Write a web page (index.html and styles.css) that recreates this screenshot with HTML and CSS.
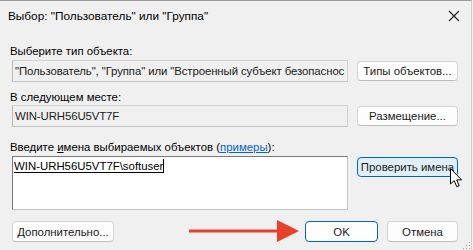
FILE: index.html
```html
<!DOCTYPE html>
<html lang="ru">
<head>
    <meta charset="UTF-8">
    <title>Выбор: "Пользователь" или "Группа"</title>
    <link rel="stylesheet" href="styles.css">
</head>
<body>
    <div class="dialog">
        <div class="titlebar">
            <span class="title">Выбор: "Пользователь" или "Группа"</span>
            <svg class="close" width="12" height="12" viewBox="0 0 12 12">
                <path d="M1 1 L11 11 M11 1 L1 11" stroke="#1a1a1a" stroke-width="1.1" fill="none"/>
            </svg>
        </div>

        <div class="content">
            <div class="label first">Выберите тип объекта:</div>
            <div class="row">
                <div class="field">"Пользователь", "Группа" или "Встроенный субъект безопаснос</div>
                <button class="btn">Типы объектов...</button>
            </div>

            <div class="label second">В следующем месте:</div>
            <div class="row">
                <div class="field">WIN-URH56U5VT7F</div>
                <button class="btn">Размещение...</button>
            </div>

            <div class="label third">Введите <u>и</u>мена выбираемых объектов (<a class="link">примеры</a>):</div>
            <div class="row top">
                <div class="names"><span class="resolved">WIN-URH56U5VT7F\softuser</span><span class="caret"></span></div>
                <button class="btn check">Проверить имена</button>
            </div>

            <div class="bottom">
                <button class="btn more">Дополнительно...</button>
                <div class="spacer"></div>
                <button class="btn ok">OK</button>
                <button class="btn cancel">Отмена</button>
            </div>
        </div>

        <!-- red arrow pointing at OK -->
        <svg class="arrow" width="112" height="22" viewBox="0 0 112 22">
            <path d="M0 9.5 H92 V12.5 H0 Z" fill="#e8402a"/>
            <path d="M88 0 L110 11 L88 22 Z" fill="#e8402a"/>
        </svg>

        <!-- mouse pointer -->
        <svg class="pointer" width="13" height="20" viewBox="0 0 13 20">
            <path d="M0.5 0.5 V16 L4.2 12.6 L6.8 18.8 L9.2 17.8 L6.7 11.9 L11.6 11.9 Z" fill="#fff" stroke="#000" stroke-width="1" stroke-linejoin="round"/>
        </svg>

        <svg class="grip" width="9" height="9" viewBox="0 0 9 9">
            <rect x="7" y="1" width="1" height="1" fill="#a0a0a0"/>
            <rect x="4" y="4" width="1" height="1" fill="#a0a0a0"/>
            <rect x="7" y="4" width="1" height="1" fill="#a0a0a0"/>
            <rect x="1" y="7" width="1" height="1" fill="#a0a0a0"/>
            <rect x="4" y="7" width="1" height="1" fill="#a0a0a0"/>
            <rect x="7" y="7" width="1" height="1" fill="#a0a0a0"/>
        </svg>
    </div>
</body>
</html>
```

FILE: styles.css
```css
body {
    margin: 0;
    padding: 0;
    background-color: #f0f0f0;
    font-family: "Segoe UI", "Liberation Sans", Arial, sans-serif;
    font-size: 11.4px;
    color: #000;
}

.dialog {
    position: relative;
    width: 471px;
    height: 249px;
    border-top: 1px solid #9b9b9b;
    border-right: 1px solid #cfcfcf;
    background-color: #f0f0f0;
    overflow: hidden;
}

.titlebar {
    height: 29px;
    display: flex;
    align-items: center;
    justify-content: space-between;
    padding: 0 11px 0 8px;
}

.title {
    font-size: 11.8px;
}

.close {
    display: block;
}

.content {
    padding: 0 13px 0 12px;
}

.label {
    line-height: 16px;
    margin-left: -2px;
}

.label.first {
    margin-top: 13px;
    margin-bottom: 1px;
}

.label.second {
    margin-top: 7px;
}

.label.third {
    margin-top: 12px;
    margin-bottom: 1px;
}

.link {
    color: #0066cc;
    text-decoration: underline;
}

.row {
    display: flex;
    align-items: center;
    gap: 9px;
}

.row.top {
    align-items: flex-start;
}

.field {
    box-sizing: border-box;
    width: 336px;
    height: 22px;
    line-height: 20px;
    padding: 0 2px;
    border: 1px solid #d2d2d2;
    border-left-color: #b9b9b9;
    border-bottom-color: #c2c2c2;
    white-space: nowrap;
    overflow: hidden;
    letter-spacing: -0.1px;
    color: #1a1a1a;
}

.btn {
    box-sizing: border-box;
    width: 101px;
    height: 20px;
    padding: 0;
    font-family: inherit;
    font-size: 11.4px;
    color: #1a1a1a;
    background-color: #fdfdfd;
    border: 1px solid #d3d3d3;
    border-bottom-color: #bdbdbd;
    border-radius: 4px;
    white-space: nowrap;
}

.btn.check {
    margin-top: 1px;
    background-color: #e0eef9;
    border-color: #0067c0;
}

.names {
    box-sizing: border-box;
    width: 336px;
    height: 54px;
    background-color: #fff;
    border: 1px solid #7a7a7a;
    border-right-color: #c4c4c4;
    border-bottom-color: #c4c4c4;
    padding: 1px 1px;
    line-height: 16px;
    color: #000;
}

.resolved {
    border-bottom: 1px solid #000;
}

.caret {
    display: inline-block;
    width: 1px;
    height: 14px;
    background-color: #000;
    vertical-align: -3px;
}

.bottom {
    display: flex;
    gap: 9px;
    margin-top: 11px;
}

.spacer {
    flex: 1;
}

.btn.more {
    width: 102px;
    height: 21px;
}

.btn.ok {
    width: 73px;
    height: 21px;
    border-color: #0067c0;
}

.btn.cancel {
    width: 71px;
    height: 21px;
}

.arrow {
    position: absolute;
    left: 189px;
    top: 219px;
}

.pointer {
    position: absolute;
    left: 450px;
    top: 167px;
}

.grip {
    position: absolute;
    right: 0;
    bottom: 0;
}
```
